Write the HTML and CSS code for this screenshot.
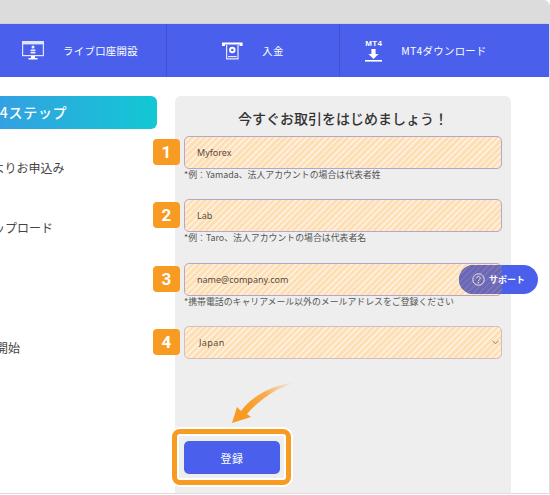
FILE: index.html
```html
<!DOCTYPE html>
<html lang="ja">
<head>
    <meta charset="UTF-8">
    <meta name="viewport" content="width=device-width, initial-scale=1.0">
    <title>口座開設</title>
    <link rel="stylesheet" href="styles.css">
</head>
<body>
    <div class="window">
        <div class="topbar"></div>
        <nav class="nav">
            <a class="nav-item">
                <svg class="nav-icon" width="22" height="19" viewBox="0 0 22 19">
                    <rect x="0.6" y="0.6" width="20.8" height="14" fill="none" stroke="#dfe4ff" stroke-width="1.2"/>
                    <rect x="1" y="1" width="20" height="2.4" fill="#dfe4ff"/>
                    <circle cx="11" cy="6" r="1.5" fill="#eef0ff"/>
                    <path d="M8.6 8.4h4.8v1.6H8.6zM8.6 10.8h4.8v1.6H8.6z" fill="#eef0ff"/>
                    <path d="M9 15h4v2H9zM6.5 17h9v1.4h-9z" fill="#fff"/>
                </svg>
                <span>ライブ口座開設</span>
            </a>
            <a class="nav-item">
                <svg class="nav-icon" width="21" height="18" viewBox="0 0 21 18">
                    <path d="M0 0.5h20.6v3.6h-3V2.6H3v1.5H0z" fill="#fff"/>
                    <path d="M4.6 3v13.8h11.4V3" fill="none" stroke="#e6e9ff" stroke-width="1.2"/>
                    <circle cx="10.3" cy="8" r="3.2" fill="#fff"/>
                    <circle cx="10.3" cy="8" r="1.3" fill="#4a60ec"/>
                    <path d="M6 14h8.6v1.2H6z" fill="#e6e9ff"/>
                </svg>
                <span>入金</span>
            </a>
            <a class="nav-item">
                <div class="mt4-icon">
                    <b>MT4</b>
                    <svg width="17" height="13" viewBox="0 0 17 13">
                        <path d="M6.4 0h4.2v5h3L8.5 10 3.4 5h3z" fill="#fff"/>
                        <path d="M0 11h17v1.6H0z" fill="#fff"/>
                    </svg>
                </div>
                <span>MT4ダウンロード</span>
            </a>
        </nav>

        <div class="main">
            <div class="steps">
                <h3 class="steps-title">かんたん4ステップ</h3>
                <div class="step">フォームよりお申込み</div>
                <div class="step">書類をアップロード</div>
                <div class="step step-last">お取引の開始</div>
            </div>

            <form class="panel">
                <h2>今すぐお取引をはじめましょう！</h2>
                <div class="field">
                    <span class="badge">1</span>
                    <input class="hatch" type="text" value="Myforex">
                    <p class="hint">*例：Yamada、法人アカウントの場合は代表者姓</p>
                </div>
                <div class="field">
                    <span class="badge">2</span>
                    <input class="hatch" type="text" value="Lab">
                    <p class="hint">*例：Taro、法人アカウントの場合は代表者名</p>
                </div>
                <div class="field">
                    <span class="badge">3</span>
                    <input class="hatch" type="text" value="name@company.com">
                    <p class="hint">*携帯電話のキャリアメール以外のメールアドレスをご登録ください</p>
                </div>
                <div class="field">
                    <span class="badge">4</span>
                    <select class="hatch select-box">
                        <option>Japan</option>
                    </select>
                    <svg class="chevron" width="7" height="5" viewBox="0 0 7 5">
                        <path d="M0.6 0.8L3.5 3.8L6.4 0.8" fill="none" stroke="#8c7f74" stroke-width="1"/>
                    </svg>
                </div>
                <div class="submit-frame">
                    <button type="button">登録</button>
                </div>
            </form>
        </div>

        <!-- annotation arrow -->
        <svg class="arrow" width="550" height="495" viewBox="0 0 550 495">
            <defs>
                <linearGradient id="arrowFade" gradientUnits="userSpaceOnUse" x1="244" y1="412" x2="297" y2="382">
                    <stop offset="0" stop-color="#f79b22"/>
                    <stop offset="0.45" stop-color="#f8ab4c"/>
                    <stop offset="1" stop-color="#f9c98c" stop-opacity="0"/>
                </linearGradient>
            </defs>
            <path d="M232 423L237 407L241 411C251 397 271 385 297 382C276 388 259 400 247 414L251 417Z" fill="url(#arrowFade)"/>
        </svg>

        <a class="support">
            <svg width="13" height="13" viewBox="0 0 13 13">
                <circle cx="6.5" cy="6.5" r="5.7" fill="none" stroke="#f2e6d8" stroke-width="1"/>
                <path d="M4.7 5.2C4.7 3 8.3 3 8.3 5.1C8.3 6.4 6.5 6.5 6.5 7.9" fill="none" stroke="#f2e6d8" stroke-width="1"/>
                <circle cx="6.5" cy="9.7" r="0.7" fill="#f2e6d8"/>
            </svg>
            <span>サポート</span>
        </a>
    </div>
</body>
</html>
```

FILE: styles.css
```css
html, body {
    margin: 0;
    padding: 0;
    background-color: #fff;
}
body {
    font-family: "Noto Sans CJK JP", "Noto Sans", sans-serif;
    color: #444;
}
.window {
    position: relative;
    width: 549px;
    height: 493px;
    overflow: hidden;
    background-color: #fff;
    border-right: 1px solid #ddd;
    border-bottom: 1px solid #ddd;
    border-top-right-radius: 6px;
}
.topbar {
    height: 23px;
    background-color: #dcdcdc;
    border-bottom: 1px solid #d0d0d0;
}

/* Nav */
.nav {
    display: flex;
    height: 53px;
    background-color: #4a60ec;
}
.nav-item {
    display: flex;
    align-items: center;
    justify-content: center;
    gap: 19px;
    width: 172px;
    flex: none;
    border-right: 1px solid #3e51cf;
    color: #fff;
    font-size: 10.4px;
    letter-spacing: 0.3px;
}
.nav-item:first-child {
    margin-left: -6px;
}
.nav-item:last-child {
    border-right: none;
}
.mt4-icon {
    display: flex;
    flex-direction: column;
    align-items: center;
    line-height: 9px;
    gap: 1px;
}
.mt4-icon b {
    font-family: "Liberation Sans", sans-serif;
    font-size: 8px;
}

/* Layout */
.main {
    display: flex;
    gap: 18px;
    padding-top: 19px;
}
.steps {
    flex: none;
    width: 212px;
    margin-left: -55px;
}
.steps-title {
    margin: 0 0 8px;
    height: 33px;
    line-height: 33px;
    border-radius: 6px;
    background: linear-gradient(to right, #3f93e6, #12c8d4);
    color: #fff;
    font-size: 14px;
    font-weight: 500;
    letter-spacing: 0.7px;
    text-indent: -4px;
}
.step {
    display: flex;
    align-items: center;
    height: 60px;
    font-size: 12px;
}
.step-last {
    margin-top: 60px;
    padding-left: 3px;
}

/* Form panel */
.panel {
    position: relative;
    width: 318px;
    height: 420px;
    padding: 0 9px;
    background-color: #eee;
    border-radius: 6px;
}
.panel h2 {
    margin: 0;
    padding-top: 11px;
    height: 29px;
    line-height: 22px;
    text-align: center;
    font-size: 14px;
    font-weight: 500;
    color: #333;
}
.field {
    position: relative;
    height: 63.33px;
}
.hatch {
    display: block;
    width: 100%;
    height: 33px;
    box-sizing: border-box;
    padding: 0 12px;
    border: 1px solid #b8a6c6;
    border-radius: 5px;
    outline: none;
    background: repeating-linear-gradient(135deg, #fddfb6 0, #fddfb6 2.6px, #feeeda 2.6px, #feeeda 4.4px);
    color: #5a4a3a;
    font-family: "Noto Sans", sans-serif;
    font-size: 9px;
}
.select-box {
    appearance: none;
    -webkit-appearance: none;
    padding-left: 14px;
    border-color: #d3bcc4;
    letter-spacing: 0.4px;
}
.chevron {
    position: absolute;
    right: 3px;
    top: 14px;
}
.badge {
    position: absolute;
    left: -31px;
    top: 3px;
    width: 27px;
    height: 26px;
    line-height: 26px;
    border-radius: 4px;
    background-color: #f79b22;
    color: #fff;
    text-align: center;
    font-family: "Roboto", sans-serif;
    font-size: 17px;
    font-weight: 700;
}
.hint {
    margin: 0;
    line-height: 12px;
    font-size: 8.9px;
    color: #555;
}

/* Submit */
.submit-frame {
    width: 96px;
    height: 33px;
    margin: 40px 0 0 -12px;
    padding: 7px 6px 6px 7px;
    border: 5px solid #f79b22;
    border-radius: 8px;
    box-shadow: 0 0 0 2px #fff, inset 0 0 0 2px #fff;
}
.submit-frame button {
    display: block;
    width: 96px;
    height: 33px;
    border: none;
    border-radius: 5px;
    background-color: #4a60ec;
    color: #fff;
    font-family: inherit;
    font-size: 11px;
    letter-spacing: 0.5px;
    cursor: pointer;
}
.arrow {
    position: absolute;
    left: 0;
    top: 0;
    pointer-events: none;
}

/* Floating support button, the form's hatching shows over its left part */
.support {
    position: absolute;
    left: 459px;
    top: 265px;
    display: flex;
    align-items: center;
    gap: 4px;
    width: 79px;
    height: 29px;
    box-sizing: border-box;
    padding-left: 13px;
    overflow: hidden;
    border-radius: 15px;
    background-color: #4a60ec;
    color: #fff;
    font-size: 9px;
    font-weight: 700;
}
.support::before {
    content: "";
    position: absolute;
    left: 0;
    top: 0;
    width: 43px;
    height: 100%;
    background: repeating-linear-gradient(135deg, #6a67b6 0, #6a67b6 2.6px, #7873bb 2.6px, #7873bb 4.4px);
}
.support svg, .support span {
    position: relative;
}
```
